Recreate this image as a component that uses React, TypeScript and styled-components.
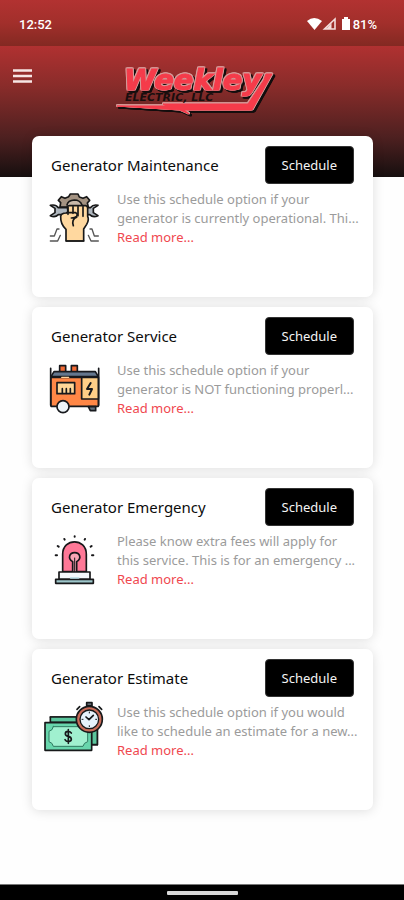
import React from "react";
import styled, { createGlobalStyle } from "styled-components";

const GlobalStyle = createGlobalStyle`
  *, *::before, *::after { box-sizing: border-box; }
  body {
    margin: 0;
    background: #fefefe;
    font-family: "Noto Sans", "Open Sans", sans-serif;
  }
`;

const Screen = styled.div`
  display: flex;
  flex-direction: column;
  min-height: 100vh;
`;

const StatusBar = styled.div`
  display: flex;
  align-items: center;
  justify-content: space-between;
  height: 46px;
  padding: 2px 27px 0 19px;
  background: linear-gradient(#b23231, #a22f2b 50%, #832922);
  color: #fff;
  font-family: Roboto, sans-serif;
  font-size: 13px;
  font-weight: 500;
`;

const StatusIcons = styled.div`
  display: flex;
  align-items: center;
  gap: 3px;
`;

const Header = styled.header`
  display: grid;
  grid-template-columns: 32px 1fr 46px;
  align-items: start;
  height: 131px;
  padding: 16px 6px 0;
  background: linear-gradient(#b03131, #8a2c2a 30%, #4d2020 70%, #160f0f);
`;

const MenuButton = styled.button`
  display: flex;
  align-items: center;
  justify-content: center;
  width: 32px;
  height: 28px;
  padding: 0;
  border: 0;
  background: none;
  cursor: pointer;
`;

const Brand = styled.div`
  display: flex;
  justify-content: center;
`;

const LogoMark = styled.g`
  fill: #f53b4a;
  stroke: #f53b4a;
  filter: drop-shadow(1px 0 #d59a98) drop-shadow(-1px 0 #d59a98) drop-shadow(0 -1px #d59a98)
    drop-shadow(2px 2px #120d0d);
`;

const CardList = styled.main`
  display: flex;
  flex: 1;
  flex-direction: column;
  gap: 10px;
  margin-top: -41px;
  padding: 0 31px 74px 32px;
`;

const Card = styled.section`
  min-height: 161px;
  padding: 10px 12px 0;
  border-radius: 7px;
  background: #fff;
  box-shadow: 0 1px 12px rgba(0, 0, 0, 0.13);
`;

const CardTop = styled.div`
  display: flex;
  align-items: center;
  justify-content: space-between;
  padding: 0 7px;
`;

const Title = styled.h2`
  margin: 0;
  color: #0c0c0c;
  font-size: 15px;
  font-weight: 400;
  line-height: 36px;
`;

const ScheduleButton = styled.button`
  height: 38px;
  padding: 0 16px;
  border: 1px solid #333;
  border-radius: 4px;
  background: #000;
  color: #f4f4f4;
  font-family: inherit;
  font-size: 13px;
  cursor: pointer;
`;

const CardBody = styled.div`
  display: grid;
  grid-template-columns: 60px 1fr;
  gap: 13px;
  padding-top: 6px;
`;

const Details = styled.div`
  min-width: 0;
  font-size: 13px;
  line-height: 19px;
`;

const Line = styled.span`
  display: block;
  color: #9b9b9b;
  white-space: nowrap;
`;

const MoreLink = styled.a`
  color: #f0484f;
  text-decoration: none;
`;

const IconSvg = styled.svg`
  width: 60px;
  height: 60px;
  overflow: visible;
`;

const NavBar = styled.footer`
  display: flex;
  align-items: center;
  justify-content: center;
  height: 16px;
  padding-top: 1px;
  border-top: 1px solid #777;
  background: #000;
`;

const NavHandle = styled.div`
  width: 71px;
  height: 4px;
  border-radius: 1px;
  background: #d8d8d8;
`;

const FistIcon = () => (
  <IconSvg viewBox="12 15 180 180" aria-hidden="true" stroke="#181818" strokeWidth="5" strokeLinejoin="round" strokeLinecap="round">
    <path d="M60 66 62 53 55 46 64 35 75 40 86 35 91 27H114L118 36 129 40 140 35 149 46 142 54 145 66Z" fill="#a49382" />
    <path d="M81 60Q84 46 103 45 120 45 126 60" fill="#c8b9aa" />
    <path d="M31 61Q47 57 55 68H151Q160 57 174 61L160 70V83L174 92Q159 99 149 89H55Q45 99 31 92L45 83V70Z" fill="#aeb6be" />
    <path d="M82 65Q84 61 91 62L137 62Q143 63 143 70V94Q148 104 140 118L131 132V168H78V133Q61 118 62 94Q64 84 78 84L84 82Z" fill="#ffd89f" />
    <path d="M84 67V88M99 65V85M114 65V92M129 65V94" fill="none" />
    <path d="M80 83H107Q114 86 110 94 105 99 94 99M110 97Q94 103 100 122" fill="none" />
    <path d="M31 153H43L51 132H57M31 168H53L61 151M150 132H156L163 153H175M145 151 153 168H175" fill="none" stroke="#555" strokeWidth="4" />
    <path d="M79 168H131" />
  </IconSvg>
);

const GeneratorIcon = () => (
  <IconSvg viewBox="12 18 180 180" aria-hidden="true" stroke="#17191d" strokeWidth="5" strokeLinejoin="round" strokeLinecap="round">
    <path d="M59 49V32H77V49M94 49V32H112V49" fill="#f36c36" />
    <path d="M32 40V151M176 40V151" fill="none" />
    <path d="M33 65 42 50H166L175 65Z" fill="#64778e" />
    <path d="M33 67H175V154H33Z" fill="#ff8746" />
    <path d="M125 67H175V132H125Z" fill="#ffcf87" />
    <path d="M51 83H104V116H51Z" fill="#ffd798" />
    <path d="M67 115V101M79 115V101M91 115V101" fill="none" />
    <path d="M152 84 141 102H156L148 119" fill="none" strokeWidth="6" />
    <path d="M65 67H86" stroke="#ffd29c" strokeWidth="4" />
    <path d="M145 155H167V167H151Z" fill="#647280" />
    <circle cx="69" cy="155" r="18" fill="#eef5fa" />
  </IconSvg>
);

const SirenIcon = () => (
  <IconSvg viewBox="12 21 180 180" aria-hidden="true" stroke="#171719" strokeWidth="5" strokeLinejoin="round" strokeLinecap="round">
    <path d="M68 140V88C68 38 139 38 139 88V140Z" fill="#ff7897" />
    <path d="M98 140V110C82 100 88 83 104 83S126 100 110 110V140" fill="#f8a5b5" />
    <path d="M104 99V140" strokeWidth="3" />
    <path d="M57 141H150V163H57Z" fill="#f3f7fa" />
    <path d="M47 163H160V175H47Z" fill="#9dc6ca" />
    <path d="M92 159H116" stroke="#b8dce3" />
    <path d="M104 35V34M74 44 73 42M134 44 135 42M56 65 53 63M152 65 155 63M51 91H47M156 91H160" fill="none" strokeWidth="6" />
  </IconSvg>
);

const MoneyIcon = () => (
  <IconSvg viewBox="12 24 180 180" aria-hidden="true" stroke="#17191a" strokeWidth="5" strokeLinejoin="round" strokeLinecap="round">
    <path d="M31 66H172V149H155" fill="#55bd96" />
    <path d="M31 66V82H154V149H172V66Z" fill="#5ac59c" />
    <path d="M15 83H155V166H15Z" fill="#68d6ac" />
    <path d="M40 95H129Q130 106 143 109V140Q131 143 129 154H40Q38 143 27 140V109Q39 106 40 95Z" fill="#a0f0cf" stroke="#2f7a60" strokeWidth="3" />
    <path d="M94 114Q90 109 84 109 76 109 76 116 76 122 85 124 94 126 94 133 94 139 85 140 78 140 75 134M85 104V145" fill="none" strokeWidth="5" />
    <path d="M140 23H156V32H140Z" fill="#7a8490" />
    <path d="M177 35 185 43M119 35 111 43" fill="none" />
    <circle cx="148" cy="73" r="39" fill="#c96c59" />
    <circle cx="148" cy="73" r="28" fill="#e7f2fb" strokeWidth="4" />
    <path d="M138 66 147 74 160 61" fill="none" strokeWidth="5" />
    <path d="M148 51V54M148 92V95M126 73H129M167 73H170" fill="none" strokeWidth="3" />
  </IconSvg>
);

const Logo = () => (
  <svg width="162" height="56" viewBox="114 62 162 56" role="img" aria-label="Weekley Electric, LLC">
    <g fontFamily="DejaVu Sans, sans-serif" fontWeight="700" fontStyle="italic">
      <LogoMark>
        <path d="M264 80 248 104H163L166 106 117 106 180 110 189 114 184 110H252L272 74H266Z" strokeWidth="1" />
        <text x="124" y="90" fontSize="29" strokeWidth="1">Weekley</text>
      </LogoMark>
      <text x="125" y="101" fontSize="11" fill="#190e0e">ELECTRIC, LLC</text>
    </g>
  </svg>
);

const services = [
  {
    title: "Generator Maintenance",
    lines: ["Use this schedule option if your", "generator is currently operational. Thi..."],
    Icon: FistIcon,
  },
  {
    title: "Generator Service",
    lines: ["Use this schedule option if your", "generator is NOT functioning properl..."],
    Icon: GeneratorIcon,
  },
  {
    title: "Generator Emergency",
    lines: ["Please know extra fees will apply for", "this service. This is for an emergency ..."],
    Icon: SirenIcon,
  },
  {
    title: "Generator Estimate",
    lines: ["Use this schedule option if you would", "like to schedule an estimate for a new..."],
    Icon: MoneyIcon,
  },
];

export default function App() {
  return (
    <>
      <GlobalStyle />
      <Screen>
        <StatusBar>
          <span>12:52</span>
          <StatusIcons>
            <svg width="43" height="14" viewBox="0 0 43 14" aria-hidden="true">
              <path d="M0 4Q7-2 15 4L7.5 13Z" fill="#fff" />
              <path d="M28 2V12H17.5Z" fill="none" stroke="#f4dedc" strokeWidth="1.6" />
              <path d="M24.5 6V12H19Z" fill="#f4dedc" />
              <path d="M35 2H37V0H41V2H43V13H35Z" fill="#fff" />
            </svg>
            <span>81%</span>
          </StatusIcons>
        </StatusBar>
        <Header>
          <MenuButton type="button" aria-label="Open menu">
            <svg width="19" height="14" viewBox="0 0 19 14" aria-hidden="true">
              <path d="M0 1.5H19M0 7H19M0 12.5H19" stroke="#f7e6e5" strokeWidth="2.4" />
            </svg>
          </MenuButton>
          <Brand>
            <Logo />
          </Brand>
        </Header>
        <CardList>
          {services.map(({ title, lines, Icon }) => (
            <Card key={title}>
              <CardTop>
                <Title>{title}</Title>
                <ScheduleButton type="button">Schedule</ScheduleButton>
              </CardTop>
              <CardBody>
                <Icon />
                <Details>
                  {lines.map((line) => (
                    <Line key={line}>{line}</Line>
                  ))}
                  <MoreLink href="#more" aria-label={`Read more... ${title}`}>
                    Read more...
                  </MoreLink>
                </Details>
              </CardBody>
            </Card>
          ))}
        </CardList>
        <NavBar>
          <NavHandle />
        </NavBar>
      </Screen>
    </>
  );
}
